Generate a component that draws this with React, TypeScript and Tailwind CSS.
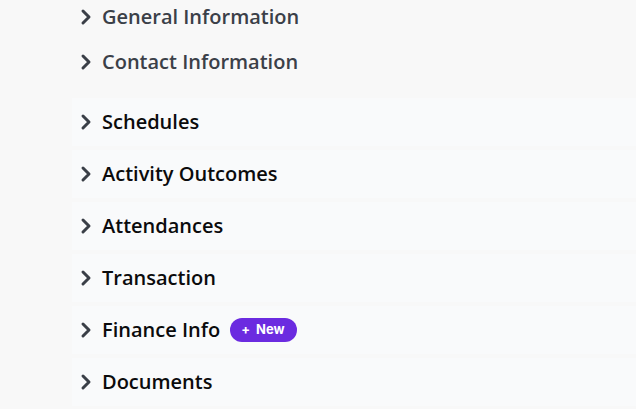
import React from "react";

function Chevron() {
  return (
    <svg width="24" height="24" viewBox="0 0 24 24" fill="none" stroke="#3a3f47" strokeWidth="3" strokeLinecap="round" strokeLinejoin="round" className="shrink-0">
      <path d="m9 18 6-6-6-6" />
    </svg>
  );
}

function Row({ label, muted, badge }: { label: string; muted?: boolean; badge?: boolean }) {
  return (
    <div className="flex items-center gap-1 pl-[74px]">
      <Chevron />
      <span className={muted ? "text-[20px] font-semibold text-[#3b4048]" : "text-[20px] font-semibold text-[#0b0b0c]"}>{label}</span>
      {badge && (
        <span className="ml-[6px] flex h-[24px] items-center gap-[6px] rounded-full bg-[#6b2be0] pl-[11px] pr-[12px] text-[13px] font-bold text-white" style={{ fontFamily: "Inter, 'Liberation Sans', sans-serif" }}>
          <span>+</span>
          <span>New</span>
        </span>
      )}
    </div>
  );
}

export default function App() {
  const items = ["Schedules", "Activity Outcomes", "Attendances", "Transaction", "Finance Info", "Documents"];
  return (
    <div className="h-[409px] w-[636px] overflow-hidden bg-[#f8f8f8]" style={{ fontFamily: "'Open Sans', sans-serif" }}>
      <div className="flex flex-col gap-[11px]">
        <div className="flex h-[34px] items-center"><Row label="General Information" muted /></div>
        <div className="flex h-[34px] items-center"><Row label="Contact Information" muted /></div>
      </div>
      <div className="mt-[19px] flex flex-col gap-[4px]">
        {items.map((it) => (
          <div key={it} className="flex h-[48px] items-center bg-[linear-gradient(to_right,#f8f8f8_72px,#f9fafb_72px)]">
            <Row label={it} badge={it === "Finance Info"} />
          </div>
        ))}
      </div>
    </div>
  );
}
